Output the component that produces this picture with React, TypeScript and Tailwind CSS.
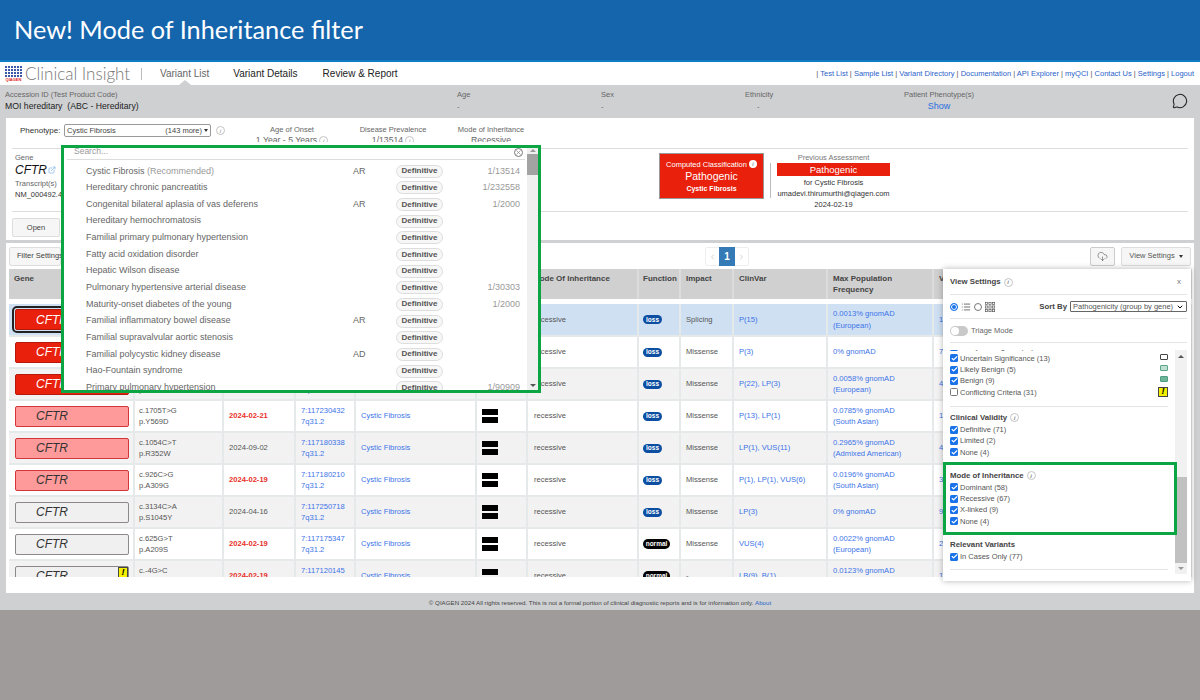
import { Check, ChevronDown, ChevronLeft, ChevronRight, CloudDownload, ExternalLink, List, MessageCircle, X } from 'lucide-react';

const sans = "font-['Liberation_Sans',Arial,sans-serif]";

const phenotypes = [
  { name: 'Cystic Fibrosis', rec: true, moi: 'AR', prev: '1/13514' },
  { name: 'Hereditary chronic pancreatitis', moi: '', prev: '1/232558' },
  { name: 'Congenital bilateral aplasia of vas deferens', moi: 'AR', prev: '1/2000' },
  { name: 'Hereditary hemochromatosis', moi: '', prev: '' },
  { name: 'Familial primary pulmonary hypertension', moi: '', prev: '' },
  { name: 'Fatty acid oxidation disorder', moi: '', prev: '' },
  { name: 'Hepatic Wilson disease', moi: '', prev: '' },
  { name: 'Pulmonary hypertensive arterial disease', moi: '', prev: '1/30303' },
  { name: 'Maturity-onset diabetes of the young', moi: '', prev: '1/2000' },
  { name: 'Familial inflammatory bowel disease', moi: 'AR', prev: '' },
  { name: 'Familial supravalvular aortic stenosis', moi: '', prev: '' },
  { name: 'Familial polycystic kidney disease', moi: 'AD', prev: '' },
  { name: 'Hao-Fountain syndrome', moi: '', prev: '' },
  { name: 'Primary pulmonary hypertension', moi: '', prev: '1/90909' },
];

type Row = {
  tone: 'focus' | 'red' | 'pink' | 'gray';
  c: string; p: string; date: string; recent: boolean; pos: string;
  fn: 'loss' | 'normal'; impact: string; clinvar: string; freq: string; pop: string; vf: string; flag?: boolean;
};

const rows: Row[] = [
  { tone: 'focus', c: 'c.1521_1523del', p: 'p.F508del', date: '2024-02-19', recent: true, pos: '7:117199646', fn: 'loss', impact: 'Splicing', clinvar: 'P(15)', freq: '0.0013% gnomAD', pop: '(European)', vf: '13' },
  { tone: 'red', c: 'c.1624G>T', p: 'p.G542X', date: '2024-02-19', recent: true, pos: '7:117227832', fn: 'loss', impact: 'Missense', clinvar: 'P(3)', freq: '0% gnomAD', pop: '', vf: '74' },
  { tone: 'red', c: 'c.3846G>A', p: 'p.W1282X', date: '2024-02-19', recent: true, pos: '7:117282492', fn: 'loss', impact: 'Missense', clinvar: 'P(22), LP(3)', freq: '0.0058% gnomAD', pop: '(European)', vf: '41' },
  { tone: 'pink', c: 'c.1705T>G', p: 'p.Y569D', date: '2024-02-21', recent: true, pos: '7:117230432', fn: 'loss', impact: 'Missense', clinvar: 'P(13), LP(1)', freq: '0.0785% gnomAD', pop: '(South Asian)', vf: '12' },
  { tone: 'pink', c: 'c.1054C>T', p: 'p.R352W', date: '2024-09-02', recent: false, pos: '7:117180338', fn: 'loss', impact: 'Missense', clinvar: 'LP(1), VUS(11)', freq: '0.2965% gnomAD', pop: '(Admixed American)', vf: '49' },
  { tone: 'pink', c: 'c.926C>G', p: 'p.A309G', date: '2024-02-19', recent: true, pos: '7:117180210', fn: 'loss', impact: 'Missense', clinvar: 'P(1), LP(1), VUS(6)', freq: '0.0196% gnomAD', pop: '(South Asian)', vf: '38' },
  { tone: 'gray', c: 'c.3134C>A', p: 'p.S1045Y', date: '2024-04-16', recent: false, pos: '7:117250718', fn: 'loss', impact: 'Missense', clinvar: 'LP(3)', freq: '0% gnomAD', pop: '', vf: '92' },
  { tone: 'gray', c: 'c.625G>T', p: 'p.A209S', date: '2024-02-19', recent: true, pos: '7:117175347', fn: 'normal', impact: 'Missense', clinvar: 'VUS(4)', freq: '0.0022% gnomAD', pop: '(European)', vf: '25' },
  { tone: 'gray', c: 'c.-4G>C', p: 'p.?', date: '2024-02-19', recent: true, pos: '7:117120145', fn: 'normal', impact: '-', clinvar: 'LB(9), B(1)', freq: '0.0123% gnomAD', pop: '(European)', vf: '18', flag: true },
];

const toneClass = {
  focus: 'bg-[#e8200c] border-[#b5190a] text-white',
  red: 'bg-[#e8200c] border-[#b5190a] text-white',
  pink: 'bg-[#ff9a9a] border-[#d2353a] text-[#333]',
  gray: 'bg-[#f0f0f0] border-[#8a8a8a] text-[#333]',
};

function Info({ className = '' }: { className?: string }) {
  return (
    <span className={`inline-flex items-center justify-center w-[9px] h-[9px] rounded-full border border-[#c4c4c4] text-[6px] italic text-[#888] bg-white leading-none ${className}`}>i</span>
  );
}

function Flag({ className = '' }: { className?: string }) {
  return (
    <span className={`flex items-center justify-center bg-[#f5f000] border border-[#444] text-[9px] font-bold italic text-black leading-none ${className}`}>!</span>
  );
}

function Box({ label, on = true }: { label: string; on?: boolean }) {
  return (
    <label className="flex items-center h-[11.3px] text-[7.5px] text-[#555] whitespace-nowrap">
      <span className={`flex items-center justify-center w-[8px] h-[8px] rounded-[1.5px] mr-[2px] ${on ? 'bg-[#1a73e8]' : 'bg-white border border-[#777]'}`}>
        {on && <Check className="w-[7px] h-[7px] text-white" strokeWidth={4} />}
      </span>
      {label}
    </label>
  );
}

function GeneRow({ row, index }: { row: Row; index: number }) {
  const bg = index === 0 ? 'bg-[#cfe0f3]' : index % 2 === 0 ? 'bg-[#f2f2f2]' : 'bg-white';
  const td = 'border-r-2 border-b-2 border-[#e6e9ea] align-middle overflow-hidden';
  return (
    <tr className={`h-[32px] text-[7.6px] ${bg}`}>
      <td className={`${td} pl-[6px]`}>
        <div className={`relative w-[114px] h-[21px] rounded-[2px] border flex items-center pl-[20px] text-[12px] italic ${toneClass[row.tone]} ${row.tone === 'focus' ? 'outline-2 outline-offset-1 outline-[#222]' : ''}`}>
          CFTR
          {row.flag && <Flag className="absolute right-[0px] top-[0px] w-[10px] h-[11px]" />}
        </div>
      </td>
      <td className={`${td} pl-[4px] text-[#555] leading-[11.3px]`}>{row.c}<br />{row.p}</td>
      <td className={`${td} pl-[5px] ${row.recent ? 'text-[#e8302a] font-bold' : 'text-[#555]'}`}>{row.date}</td>
      <td className={`${td} pl-[5px] text-[#3b73e8] leading-[11.3px]`}>{row.pos}<br />7q31.2</td>
      <td className={`${td} pl-[5px] text-[#3b73e8]`}>Cystic Fibrosis</td>
      <td className={`${td} pl-[5px]`}>
        <div className="flex flex-col gap-[2px] w-[16px]">
          <span className="h-[6px] bg-black" />
          <span className="h-[6px] bg-black" />
        </div>
      </td>
      <td className={`${td} pl-[6px] text-[#555]`}>recessive</td>
      <td className={`${td} pl-[4px]`}>
        {row.fn === 'loss'
          ? <span className="flex items-center justify-center w-[19px] h-[9px] rounded-full bg-[#0b4ea2] text-white text-[6.5px] font-bold">loss</span>
          : <span className="flex items-center justify-center w-[27px] h-[10px] rounded-full bg-black text-white text-[6.5px] font-bold">normal</span>}
      </td>
      <td className={`${td} pl-[5px] text-[#555]`}>{row.impact}</td>
      <td className={`${td} pl-[5px] text-[#3b73e8]`}>{row.clinvar}</td>
      <td className={`${td} pl-[5px] text-[#3b73e8] leading-[11.3px]`}>{row.freq}{row.pop && <><br />{row.pop}</>}</td>
      <td className={`${td} pl-[5px] text-[#3b73e8]`}>{row.vf}</td>
    </tr>
  );
}

function DropdownPanel() {
  return (
    <>
      <div className="absolute left-[64px] top-[142px] w-[473px] h-[4px] bg-white" />
      <div className={`absolute left-[61px] top-[145px] w-[480px] h-[248px] bg-white border-[3px] border-[#0ba544] overflow-hidden ${sans}`}>
        <div className="flex items-start justify-between h-[12px] ml-[3px] mr-[13px] pl-[7px] pr-[2px] border-b border-[#ddd] text-[8.5px] leading-[7px] text-[#999]">
          Search...
          <span className="flex items-center justify-center w-[9px] h-[9px] rounded-full border border-[#777]">
            <X className="w-[7px] h-[7px] text-[#777]" strokeWidth={2} />
          </span>
        </div>
        <div className="pt-[3px] pl-[22px] pr-[18px]">
          {phenotypes.map((p) => (
            <div key={p.name} className="flex items-center h-[16.65px] text-[9px] text-[#666] whitespace-nowrap">
              <span className="w-[267px]">
                {p.name}
                {p.rec && <span className="text-[#999]"> (Recommended)</span>}
              </span>
              <span className="w-[43px]">{p.moi}</span>
              <span className="flex items-center justify-center w-[47px] h-[13px] rounded-full border border-[#ddd] bg-[#f7f7f7] text-[8px] font-bold text-[#555]">Definitive</span>
              <span className="flex-1 text-right text-[#999]">{p.prev}</span>
            </div>
          ))}
        </div>
        <div className="absolute right-0 top-0 w-[11px] h-full bg-[#f0f0f0] flex flex-col items-center">
          <span className="mt-[1px] w-0 h-0 border-x-[3px] border-x-transparent border-b-[3px] border-b-[#999]" />
          <span className="mt-[2px] w-full h-[21px] bg-[#a3a3a3]" />
          <span className="mt-auto mb-[3px] w-0 h-0 border-x-[3px] border-x-transparent border-t-[3px] border-t-[#555]" />
        </div>
      </div>
    </>
  );
}

function SettingsPanel() {
  return (
    <div className={`absolute left-[943px] top-[269px] w-[248px] h-[312px] bg-white shadow-[0_0_6px_rgba(0,0,0,0.3)] pl-[7px] pr-[4px] ${sans}`}>
      <div className="flex items-center justify-between h-[26px] pt-[1px] border-b border-[#e4e4e4] text-[#444] pr-[6px]">
        <span className="flex items-center gap-[3px] text-[7.8px] font-bold">View Settings <Info /></span>
        <span className="text-[8px] text-[#777]">x</span>
      </div>
      <div className="flex items-center h-[24px] border-b border-[#e4e4e4]">
        <span className="w-[8px] h-[8px] rounded-full border border-[#1a73e8] bg-[#1a73e8] ring-1 ring-inset ring-white" />
        <List className="w-[10px] h-[10px] ml-[3px] text-[#555]" strokeWidth={2} />
        <span className="w-[8px] h-[8px] rounded-full border border-[#777] ml-[3px]" />
        <svg viewBox="0 0 9 9" className="w-[10px] h-[10px] ml-[3px]" fill="none" stroke="#555" strokeWidth="0.6">
          {[0, 3.2, 6.4].flatMap((y) => [0, 3.2, 6.4].map((x) => <rect key={`${x}-${y}`} x={x + 0.3} y={y + 0.3} width="2" height="2" />))}
        </svg>
        <span className="ml-auto text-[7.8px] font-bold text-[#444]">Sort By</span>
        <span className="flex items-center justify-between ml-[3px] w-[117px] h-[11px] border border-[#666] rounded-[1px] pl-[2px] pr-[2px] text-[7.5px] text-[#555] whitespace-nowrap">
          Pathogenicity (group by gene)
          <ChevronDown className="w-[8px] h-[8px] text-black" strokeWidth={3} />
        </span>
      </div>
      <div className="flex items-center h-[24px] pt-[1px] border-b border-[#e4e4e4] text-[7.5px] text-[#666]">
        <span className="flex items-center w-[18px] h-[10px] rounded-full bg-[#c9c9c9] mr-[3px] pl-[1px]">
          <span className="w-[8px] h-[8px] rounded-full bg-white" />
        </span>
        Triage Mode
      </div>
      <div className="relative flex mt-[7px] h-[224px]">
        <div className="w-[218px] overflow-hidden">
          <div className="-mt-[8.6px]">
            <Box label="Likely Pathogenic (11)" />
            <div className="relative">
              <Box label="Uncertain Significance (13)" />
              <span className="absolute right-0 top-[1px] w-[8px] h-[6px] rounded-[1px] border border-[#444] bg-white" />
            </div>
            <div className="relative">
              <Box label="Likely Benign (5)" />
              <span className="absolute right-0 top-[1px] w-[8px] h-[6px] rounded-[1px] border border-[#5aa68c] bg-[#bfdfd0]" />
            </div>
            <div className="relative">
              <Box label="Benign (9)" />
              <span className="absolute right-0 top-[1px] w-[8px] h-[6px] rounded-[1px] border border-[#4f9e84] bg-[#6fb59a]" />
            </div>
            <div className="relative">
              <Box label="Conflicting Criteria (31)" on={false} />
              <Flag className="absolute right-0 top-0 w-[10px] h-[10px]" />
            </div>
          </div>
          <div className="mt-[8px] border-t border-[#e4e4e4] pt-[5px]">
            <div className="flex items-center gap-[3px] h-[12px] text-[7.8px] font-bold text-[#444]">Clinical Validity <Info /></div>
            <Box label="Definitive (71)" />
            <Box label="Limited (2)" />
            <Box label="None (4)" />
          </div>
          <div className="mt-[12px]">
            <div className="flex items-center gap-[3px] h-[12px] text-[7.8px] font-bold text-[#444]">Mode of Inheritance <Info /></div>
            <Box label="Dominant (58)" />
            <Box label="Recessive (67)" />
            <Box label="X-linked (9)" />
            <Box label="None (4)" />
          </div>
          <div className="mt-[12px] border-b border-[#e4e4e4] pb-[7px]">
            <div className="flex items-center h-[12px] text-[7.8px] font-bold text-[#444]">Relevant Variants</div>
            <Box label="In Cases Only (77)" />
          </div>
        </div>
        <div className="ml-auto w-[12px] h-full bg-[#f1f1f1] flex flex-col items-center">
          <span className="mt-[5px] w-0 h-0 border-x-[3px] border-x-transparent border-b-[3px] border-b-[#555]" />
          <span className="mt-auto w-full h-[86px] bg-[#c1c1c1]" />
          <span className="my-[4px] w-0 h-0 border-x-[3px] border-x-transparent border-t-[3px] border-t-[#999]" />
        </div>
      </div>
      <div className="absolute left-0 top-[193px] w-[234px] h-[73px] border-[3px] border-[#0ba544]" />
    </div>
  );
}

export default function App() {
  const links = ['Test List', 'Sample List', 'Variant Directory', 'Documentation', 'API Explorer', 'myQCI', 'Contact Us', 'Settings', 'Logout'];
  const heads = ['Gene', '', '', '', '', '', 'Mode Of Inheritance', 'Function', 'Impact', 'ClinVar', 'Max Population Frequency', 'Variant Frequency'];

  return (
    <div className={`relative w-[1200px] h-[700px] overflow-hidden bg-[#9e9b9a] text-[7.5px] ${sans}`}>
      <header className="h-[62px] bg-[#1565ad] border-b-[2px] border-[#0f7cc4] flex items-center pl-[14px] text-white text-[25.3px] font-['Lato',sans-serif]">
        New! Mode of Inheritance filter
      </header>

      <nav className="relative flex items-center h-[23px] bg-white pl-[5px] pr-[6px]">
        <div className="flex flex-col items-center w-[17px] mr-[3px]">
          <div className="grid grid-cols-6 gap-[1px]">
            {Array.from({ length: 24 }).map((_, i) => <span key={i} className="w-[2px] h-[2px] bg-[#3b57a8]" />)}
          </div>
          <span className="text-[4px] font-bold leading-[5px] text-[#d22]">QIAGEN</span>
        </div>
        <span className="text-[17px] font-light text-[#777] font-['Lato',sans-serif] w-[116px] whitespace-nowrap">Clinical Insight</span>
        <span className="w-px h-[12px] bg-[#bbb]" />
        <span className="ml-[18px] text-[10px] text-[#666]">Variant List</span>
        <span className="ml-[24px] text-[10px] text-[#222]">Variant Details</span>
        <span className="ml-[25px] text-[10px] text-[#222]">Review &amp; Report</span>
        <span className="ml-auto text-[7.5px] text-[#2a62c9] whitespace-nowrap">
          {links.map((l) => <span key={l}><span className="text-[#555]">| </span>{l} </span>)}
        </span>
        <span className="absolute left-[179px] bottom-0 w-0 h-0 border-x-[6px] border-x-transparent border-b-[5px] border-b-[#cfd0d2]" />
      </nav>

      <div className="h-[525px] bg-[#cfd0d2] px-[6px] flex flex-col">
        <section className="flex h-[33px] pt-[4px] text-[#666] leading-[11px]">
          <div className="w-[451px] -ml-[1px] mr-[1px]">
            <div>Accession ID (Test Product Code)</div>
            <div className="mt-[1px] text-[8.7px] text-[#222]">MOI hereditary&nbsp; (ABC - Hereditary)</div>
          </div>
          <div className="w-[144px]">Age<div className="mt-[1px]">-</div></div>
          <div className="w-[144px]">Sex<div className="mt-[1px]">-</div></div>
          <div className="w-[159px]">Ethnicity<div className="mt-[1px] pl-[12px]">-</div></div>
          <div className="w-[70px] text-center whitespace-nowrap">Patient Phenotype(s)<div className="mt-[1px] text-[9px] text-[#2a6ee0]">Show</div></div>
          <MessageCircle className="ml-auto mr-[6px] mt-[4px] w-[16px] h-[16px] text-[#222]" strokeWidth={1.6} />
        </section>

        <section className="h-[122px] bg-white flex flex-col overflow-hidden">
          <div className="flex h-[31px] mx-[6px] border-b border-[#ddd] pt-[6px] text-[#666]">
            <span className="w-[52px] pl-[8px] pt-[1px] text-[8px] text-[#333] whitespace-nowrap">Phenotype:</span>
            <span className="flex items-center justify-between w-[147px] h-[13px] border border-[#999] rounded-[2px] px-[2px] text-[#444]">
              Cystic Fibrosis
              <span className="flex items-center gap-[2px]">(143 more)<span className="w-0 h-0 border-x-[2px] border-x-transparent border-t-[3px] border-t-[#333]" /></span>
            </span>
            <Info className="ml-[5px] mt-[2px]" />
            <div className="w-[86px] ml-[24px] text-center leading-[11px]">Age of Onset<div className="flex items-center justify-center gap-[2px] text-[8.7px] whitespace-nowrap">1 Year - 5 Years <Info /></div></div>
            <div className="w-[90px] ml-[13px] text-center leading-[11px]">Disease Prevalence<div className="flex items-center justify-center gap-[2px] text-[8.7px]">1/13514 <Info /></div></div>
            <div className="w-[80px] ml-[13px] text-center leading-[11px] whitespace-nowrap">Mode of Inheritance<div className="text-[8.7px]">Recessive</div></div>
          </div>
          <div className="flex h-[63px] mx-[6px] border-b border-[#ddd]">
            <div className="w-[647px] pl-[3px] pt-[4px] text-[#666]">
              <div className="leading-[10px]">Gene</div>
              <div className="flex items-center text-[12px] italic text-[#111] leading-[14px]">CFTR<ExternalLink className="w-[8px] h-[8px] ml-[1px] text-[#7ab0ea]" /></div>
              <div className="mt-[2px] leading-[10px]">Transcript(s)</div>
              <div className="leading-[12px] text-[#333]">NM_000492.4</div>
            </div>
            <div className="flex flex-col items-center justify-center w-[105px] h-[46px] mt-[4px] bg-[#e8200c] border border-[#999] text-white leading-none">
              <span className="flex items-center gap-[2px]">Computed Classification <span className="flex items-center justify-center w-[8px] h-[8px] rounded-full bg-white text-[6px] italic text-[#555]">i</span></span>
              <span className="my-[3px] text-[10.5px]">Pathogenic</span>
              <span className="text-[7px] font-bold">Cystic Fibrosis</span>
            </div>
            <span className="w-px h-[35px] mt-[14px] ml-[6px] bg-[#bbb]" />
            <div className="ml-[6px] w-[113px] pt-[3px] text-center leading-[11px] text-[#333] whitespace-nowrap">
              <div className="text-[#777]">Previous Assessment</div>
              <div className="h-[13px] mb-[1px] bg-[#e8200c] text-white text-[9.5px] leading-[13px]">Pathogenic</div>
              <div>for Cystic Fibrosis</div>
              <div>umadevi.thirumurthi@qiagen.com</div>
              <div>2024-02-19</div>
            </div>
          </div>
          <div className="mx-[6px] pt-[6px]">
            <span className="flex items-center justify-center w-[48px] h-[19px] border border-[#ddd] rounded-[2px] bg-[#f6f6f6] text-[#444]">Open</span>
          </div>
        </section>

        <section className="mt-[3px] h-[350px] bg-white">
          <div className="relative flex items-center h-[26px] pl-[3px] pr-[3px]">
            <span className="flex items-center w-[52px] h-[19px] pl-[7px] border border-[#ddd] rounded-[2px] bg-[#f6f6f6] text-[#444] whitespace-nowrap">Filter Settings</span>
            <div className="absolute left-[699px] top-[4px] flex items-center h-[19px] border border-[#eee] rounded-[2px] text-[#bbb]">
              <ChevronLeft className="w-[13px] h-[8px]" />
              <span className="flex items-center justify-center w-[16px] h-[19px] bg-[#337ab7] text-white text-[10px] font-bold">1</span>
              <ChevronRight className="w-[13px] h-[8px]" />
            </div>
            <span className="flex items-center justify-center ml-auto w-[25px] h-[19px] border border-[#ccc] rounded-[2px] bg-[#f6f6f6]">
              <CloudDownload className="w-[11px] h-[11px] text-[#666]" strokeWidth={1.5} />
            </span>
            <span className="flex items-center justify-center gap-[4px] ml-[6px] w-[70px] h-[19px] border border-[#ddd] rounded-[2px] bg-[#f6f6f6] text-[#555]">
              View Settings <span className="w-0 h-0 border-x-[2px] border-x-transparent border-t-[3px] border-t-[#333]" />
            </span>
          </div>
          <div className="ml-[3px] w-[1183px] h-[308px] overflow-hidden">
            <table className="w-[1183px] table-fixed border-collapse">
              <colgroup>
                {[125, 89, 72, 60, 121, 51, 111, 42, 53, 94, 106, 259].map((w, i) => <col key={i} style={{ width: w }} />)}
              </colgroup>
              <thead>
                <tr className="h-[30px] bg-[#d0d0d0] text-[#444] text-[8px]">
                  {heads.map((h, i) => (
                    <th key={i} className={`border-r-2 border-[#dcdcdc] align-top pt-[4px] pr-[8px] text-left font-bold leading-[11px] overflow-hidden ${i === 7 ? 'pl-[4px]' : 'pl-[5px]'}`}>{h}</th>
                  ))}
                </tr>
                <tr className="h-[5px]"><th colSpan={12} /></tr>
              </thead>
              <tbody>
                {rows.map((r, i) => <GeneRow key={i} row={r} index={i} />)}
              </tbody>
            </table>
          </div>
        </section>

        <footer className="flex items-center justify-center h-[17px] pt-[3px] text-[6.2px] text-[#444] whitespace-nowrap">
          © QIAGEN 2024 All rights reserved. This is not a formal portion of clinical diagnostic reports and is for information only.&nbsp;<span className="text-[#2a62c9]">About</span>
        </footer>
      </div>

      <DropdownPanel />
      <SettingsPanel />
    </div>
  );
}
